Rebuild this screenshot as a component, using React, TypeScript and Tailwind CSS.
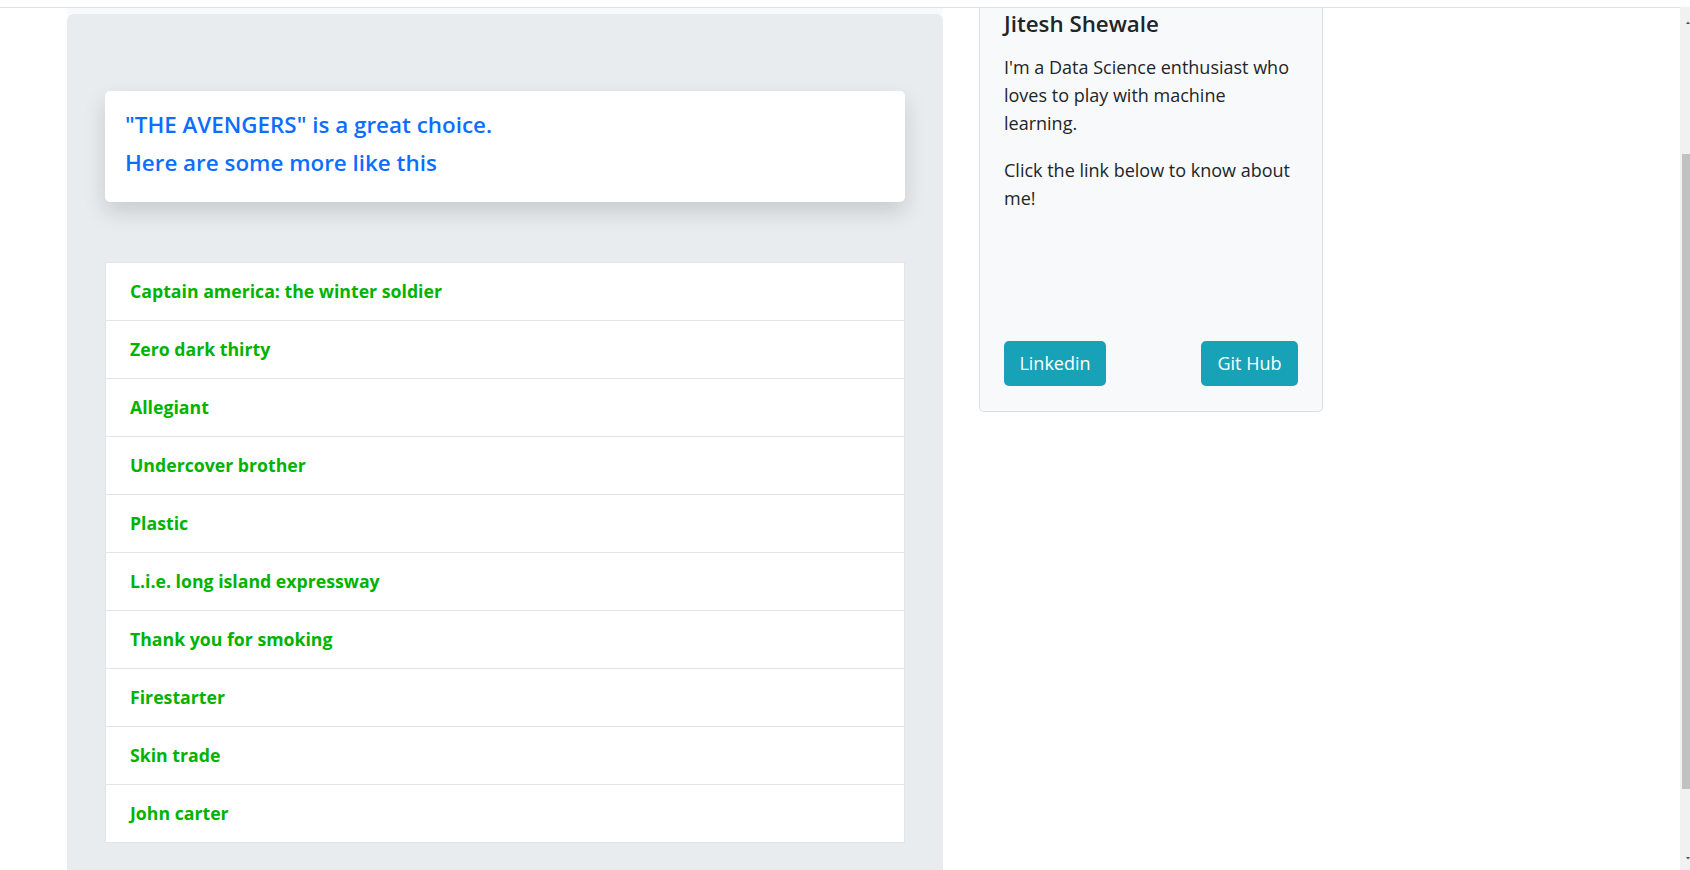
const movies = [
  'Captain america: the winter soldier',
  'Zero dark thirty',
  'Allegiant',
  'Undercover brother',
  'Plastic',
  'L.i.e. long island expressway',
  'Thank you for smoking',
  'Firestarter',
  'Skin trade',
  'John carter',
];

function Scrollbar() {
  return (
    <div className="w-[10px] shrink-0 bg-[#f1f1f1] flex flex-col">
      <svg width="10" height="20" viewBox="0 0 10 20" className="shrink-0">
        <polygon points="6,17 8,14.5 10,17" fill="#505050" />
      </svg>
      <div className="h-[127px] shrink-0" />
      <div className="h-[635px] ml-[2px] bg-[#c1c1c1] shrink-0" />
      <div className="flex-1" />
      <svg width="10" height="14" viewBox="0 0 10 14" className="shrink-0">
        <polygon points="6,1 10,1 8,3.5" fill="#505050" />
      </svg>
    </div>
  );
}

function Recommendations() {
  return (
    <div className="w-[876px] shrink-0 flex flex-col">
      <div className="h-[6px] bg-[#f8f9fa]" />
      <div className="flex-1 bg-[#e9ecef] rounded-t-[6px] pt-[77px] px-[38px]">
        {/* searched movie */}
        <div className="bg-white rounded-[5px] shadow-[0_10px_22px_rgba(0,0,0,0.14)] pt-[20px] pb-[26px] px-[20px] flex flex-col gap-[11px] text-[#0d6efd] text-[22.4px] leading-[27px] font-semibold">
          <h5>"THE AVENGERS" is a great choice.</h5>
          <h5>Here are some more like this</h5>
        </div>

        {/* similar movies */}
        <ul className="mt-[60px] border-t border-[#e2e5e8]">
          {movies.map((m) => (
            <li
              key={m}
              className="h-[58px] flex items-center bg-white border-x border-b border-[#e2e5e8] pl-[24px] text-[17.7px] font-bold text-[#00b300]"
            >
              {m}
            </li>
          ))}
        </ul>
      </div>
    </div>
  );
}

function About() {
  return (
    <div className="w-[344px] h-[404px] shrink-0 ml-[36px] flex flex-col bg-[#f8f9fa] border-x border-b border-[#dcdfe2] rounded-b-[5px] px-[24px] pt-[3px] pb-[25px] text-[#212529]">
      <h5 className="text-[22.3px] leading-[26.4px] font-semibold">Jitesh Shewale</h5>
      <p className="mt-[16px] text-[18px] leading-[28px]">
        I'm a Data Science enthusiast who loves to play with machine learning.
      </p>
      <p className="mt-[19px] text-[18px] leading-[28px]">Click the link below to know about me!</p>
      <div className="mt-auto flex justify-between">
        <a className="w-[102px] h-[45px] flex items-center justify-center rounded-[5px] bg-[#17a2b8] text-white text-[18px]">
          Linkedin
        </a>
        <a className="w-[97px] h-[45px] flex items-center justify-center rounded-[5px] bg-[#17a2b8] text-white text-[18px]">
          Git Hub
        </a>
      </div>
    </div>
  );
}

export default function App() {
  return (
    <div className="h-[870px] w-full overflow-hidden bg-white flex flex-col font-['Open_Sans','Noto_Sans',sans-serif]">
      <div className="h-[7px] shrink-0" />
      <div className="flex-1 flex min-h-0">
        <div className="flex-1 border-t border-[#dee2e6] flex items-start pl-[67px] min-h-0 h-full">
          <div className="self-stretch flex">
            <Recommendations />
          </div>
          <About />
        </div>
        <Scrollbar />
      </div>
    </div>
  );
}
